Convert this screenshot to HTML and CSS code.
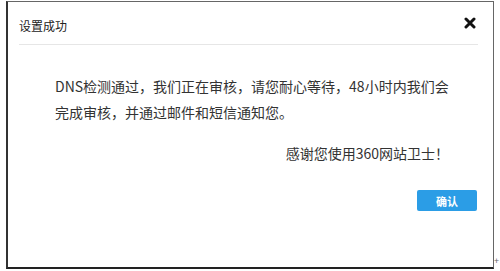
FILE: index.html
```html
<!DOCTYPE html>
<html>
<head>
    <meta charset="UTF-8">
    <title>设置成功</title>
    <link rel="stylesheet" href="styles.css">
</head>
<body>
    <div class="dialog">
        <div class="dialog-header">
            <span class="dialog-title">设置成功</span>
            <span class="dialog-close">
                <svg width="12" height="12" viewBox="0 0 12 12">
                    <path d="M2 2 L10 10 M10 2 L2 10" stroke="#111" stroke-width="3" stroke-linecap="round"/>
                </svg>
            </span>
        </div>
        <div class="dialog-body">
            <p class="msg">DNS检测通过，我们正在审核，请您耐心等待，48小时内我们会完成审核，并通过邮件和短信通知您。</p>
            <p class="thanks">感谢您使用360网站卫士！</p>
        </div>
        <div class="dialog-footer">
            <button class="btn-ok">确认</button>
        </div>
    </div>
    <span class="corner">+</span>
</body>
</html>
```

FILE: styles.css
```css
body {
    margin: 0;
    padding: 0;
    background-color: #fff;
    font-family: 'Noto Sans CJK SC', 'Liberation Sans', sans-serif;
    color: #333;
}
.dialog {
    margin: 1px 0 0 6px;
    width: 488px;
    height: 268px;
    border: 1px solid #666;
    border-left: 2px solid #333;
    border-bottom: 2px solid #222;
    box-sizing: border-box;
    display: flex;
    flex-direction: column;
}
.dialog-header {
    display: flex;
    align-items: center;
    justify-content: space-between;
    margin: 0 15px 0 11px;
    height: 43px;
    border-bottom: 1px solid #e6e6e6;
    box-sizing: border-box;
    padding-top: 4px;
}
.dialog-title {
    font-size: 12px;
    color: #222;
}
.dialog-close {
    display: flex;
    margin-right: 2px;
    margin-top: -4px;
}
.dialog-body {
    padding: 28px 42px 0 47px;
}
.msg {
    margin: 0;
    font-size: 14px;
    line-height: 26px;
}
.thanks {
    margin: 15px 2px 0 0;
    text-align: right;
    font-size: 14px;
    line-height: 26px;
}
.dialog-footer {
    display: flex;
    justify-content: flex-end;
    padding: 24px 16px 0 0;
}
.btn-ok {
    width: 60px;
    height: 21px;
    border: 0;
    border-radius: 2px;
    background-color: #2b9de6;
    color: #fff;
    font-family: inherit;
    font-size: 11px;
    font-weight: bold;
    padding: 0;
}
.corner {
    position: absolute;
    left: 494px;
    top: 256px;
    font-size: 9px;
    line-height: 10px;
    color: #666;
}
```
